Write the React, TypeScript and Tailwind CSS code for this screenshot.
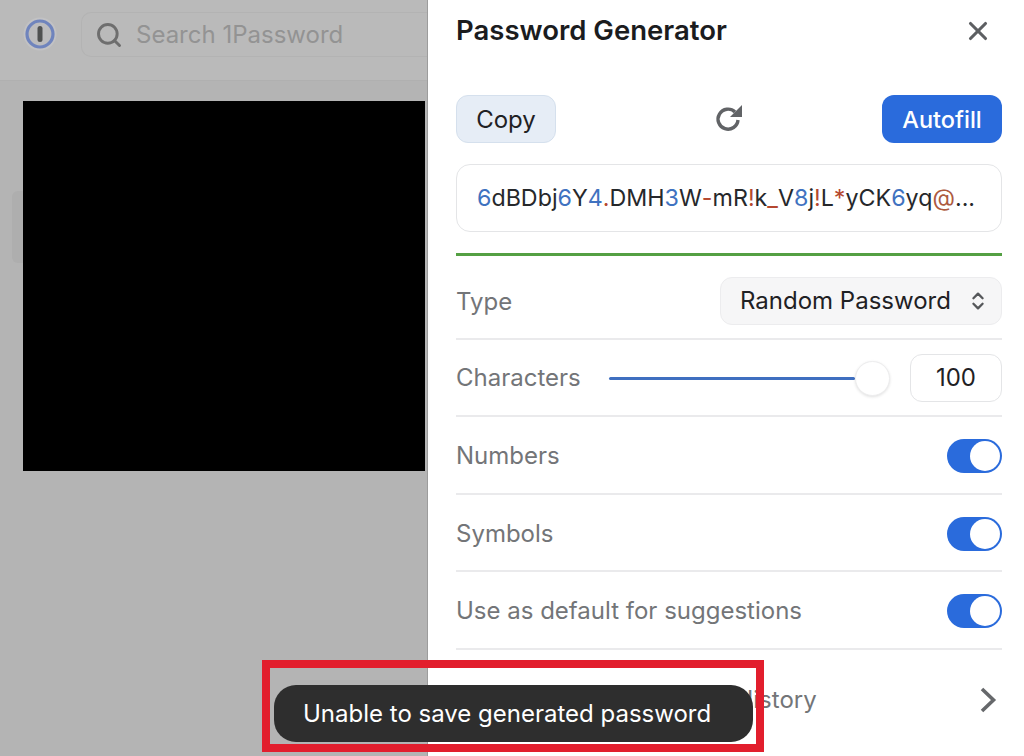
import React from "react";
import { ChevronsUpDown, Search, X } from "lucide-react";

const Toggle = () => (
  <div className="flex h-[34px] w-[55px] items-center justify-end rounded-full bg-[#2a6bdc] pr-[2px]">
    <div className="h-[30px] w-[30px] rounded-full bg-white" />
  </div>
);

const chars: [string, string][] = [
  ["6", "#3f72c0"], ["dBDbj", "#26282b"], ["6", "#3f72c0"], ["Y", "#26282b"], ["4", "#3f72c0"], [".", "#b5482f"],
  ["DMH", "#26282b"], ["3", "#3f72c0"], ["W", "#26282b"], ["-", "#b5482f"], ["mR", "#26282b"], ["!", "#b5482f"],
  ["k", "#26282b"], ["_", "#b5482f"], ["V", "#26282b"], ["8", "#3f72c0"], ["j", "#26282b"], ["!", "#b5482f"],
  ["L", "#26282b"], ["*", "#b5482f"], ["yCK", "#26282b"], ["6", "#3f72c0"], ["yq", "#26282b"], ["@", "#ad5a40"], ["...", "#26282b"],
];

const App = () => {
  return (
    <div className="relative flex h-[756px] w-[1024px] overflow-hidden bg-white font-['Inter',sans-serif]">
      <div className="flex w-[428px] shrink-0 flex-col border-r border-[#9c9c9c] bg-[#b4b4b4]">
        <div className="flex h-[81px] shrink-0 items-start gap-[24px] border-b border-[#b0b0b0] bg-[#bababa] pl-[23px] pt-[12px]">
          <svg className="mt-[5px] shrink-0" width="34" height="34" viewBox="0 0 34 34">
            <circle cx="17" cy="17" r="16.5" fill="#c2c2c4" />
            <circle cx="17" cy="17" r="13" fill="#bcbcbe" stroke="#6f84bd" strokeWidth="3.2" />
            <rect x="14.5" y="9" width="5" height="16" rx="2.5" fill="#4f5152" />
          </svg>
          <div className="flex h-[45px] flex-1 items-center gap-[13px] rounded-l-[10px] border border-r-0 border-[#b3b3b3] pl-[13px]">
            <Search size={28} strokeWidth={2.5} className="text-[#6e6e6e]" />
            <span className="text-[24px] text-[#939393]">Search 1Password</span>
          </div>
        </div>
        <div className="flex flex-1 items-start pl-[12px] pt-[20px]">
          <div className="mt-[90px] h-[72px] w-[11px] shrink-0 rounded-l-[6px] bg-[#aeaeae]" />
          <div className="h-[370px] w-[402px] bg-black" />
        </div>
      </div>

      <div className="flex flex-1 flex-col pl-[28px] pr-[22px]">
        <div className="flex h-[62px] shrink-0 items-center justify-between">
          <span className="text-[27.5px] font-semibold text-[#1b1c1e]">Password Generator</span>
          <X size={30} strokeWidth={2.5} className="mr-[9px] text-[#5d5f62]" />
        </div>
        <div className="mt-[33px] flex h-[48px] shrink-0 items-center justify-between">
          <div className="flex h-[48px] w-[100px] items-center justify-center rounded-[12px] border border-[#d5e0ed] bg-[#e6edf6] pt-[2px] text-[24px] text-[#1f2124]">
            Copy
          </div>
          <svg className="ml-[20px]" width="30" height="30" viewBox="0 0 30 30" fill="none">
            <path d="M21 8 A10 10 0 1 0 24 16" stroke="#616366" strokeWidth="3.4" />
            <path d="M28 1 V13 H16 Z" fill="#616366" />
          </svg>
          <div className="flex h-[48px] w-[120px] items-center justify-center rounded-[12px] bg-[#2a6bdc] pt-[2px] text-[23.5px] font-medium text-white">
            Autofill
          </div>
        </div>
        <div className="mt-[21px] flex h-[68px] shrink-0 items-center rounded-[14px] border border-[#e4e5e7] pl-[20px] text-[23.25px] text-[#26282b] whitespace-nowrap">
          {chars.map(([text, color], i) => (
            <span key={i} style={{ color }}>{text}</span>
          ))}
        </div>
        <div className="mt-[21px] h-[3px] shrink-0 bg-[#54a043]" />

        <div className="flex h-[84px] shrink-0 items-center justify-between border-b-2 border-[#eaeaec] pt-[8px]">
          <span className="pt-[2px] text-[24px] text-[#737578]">Type</span>
          <div className="flex h-[48px] w-[282px] items-center justify-between rounded-[12px] border border-[#ececee] bg-[#f6f6f7] pl-[19px] pr-[12px]">
            <span className="text-[24px] text-[#1f2124]">Random Password</span>
            <ChevronsUpDown size={22} strokeWidth={2.5} className="text-[#55575a]" />
          </div>
        </div>

        <div className="flex h-[77px] shrink-0 items-center border-b-2 border-[#eaeaec] pt-[1px]">
          <span className="w-[153px] shrink-0 text-[24px] text-[#737578]">Characters</span>
          <div className="h-[3px] w-[246px] shrink-0 rounded-full bg-[#3f6fc0]" />
          <div className="h-[35px] w-[35px] shrink-0 rounded-full border border-[#ededee] bg-white shadow-[0_1px_3px_rgba(0,0,0,0.12)]" />
          <div className="ml-[20px] flex h-[48px] w-[92px] shrink-0 items-center justify-center rounded-[12px] border border-[#e4e5e7] text-[24px] text-[#1f2124]">
            100
          </div>
        </div>

        <div className="flex h-[78px] shrink-0 items-center justify-between border-b-2 border-[#eaeaec] pt-[1px]">
          <span className="text-[24px] text-[#737578]">Numbers</span>
          <Toggle />
        </div>
        <div className="flex h-[77px] shrink-0 items-center justify-between border-b-2 border-[#eaeaec] pt-[3px]">
          <span className="text-[24px] text-[#737578]">Symbols</span>
          <Toggle />
        </div>
        <div className="flex h-[78px] shrink-0 items-center justify-between border-b-2 border-[#eaeaec] pt-[1px]">
          <span className="text-[24px] text-[#737578]">Use as default for suggestions</span>
          <Toggle />
        </div>

        <div className="flex h-[100px] shrink-0 items-center justify-between">
          <span className="pl-[36px] text-[24px] text-[#737578]">Generated Password History</span>
          <svg className="mr-[5px]" width="18" height="28" viewBox="0 0 18 28" fill="none">
            <path d="M3 3 L14.5 14 L3 25" stroke="#66686b" strokeWidth="3.6" />
          </svg>
        </div>
      </div>

      <div className="absolute left-[262px] top-[660px] h-[92px] w-[502px] border-[8px] border-[#e21e2d]" />
      <div className="absolute left-[274px] top-[685px] flex h-[57px] w-[479px] items-center rounded-[22px] bg-[#2e2e2e] pl-[29px] text-[24px] text-white">
        Unable to save generated password
      </div>
    </div>
  );
};

export default App;
